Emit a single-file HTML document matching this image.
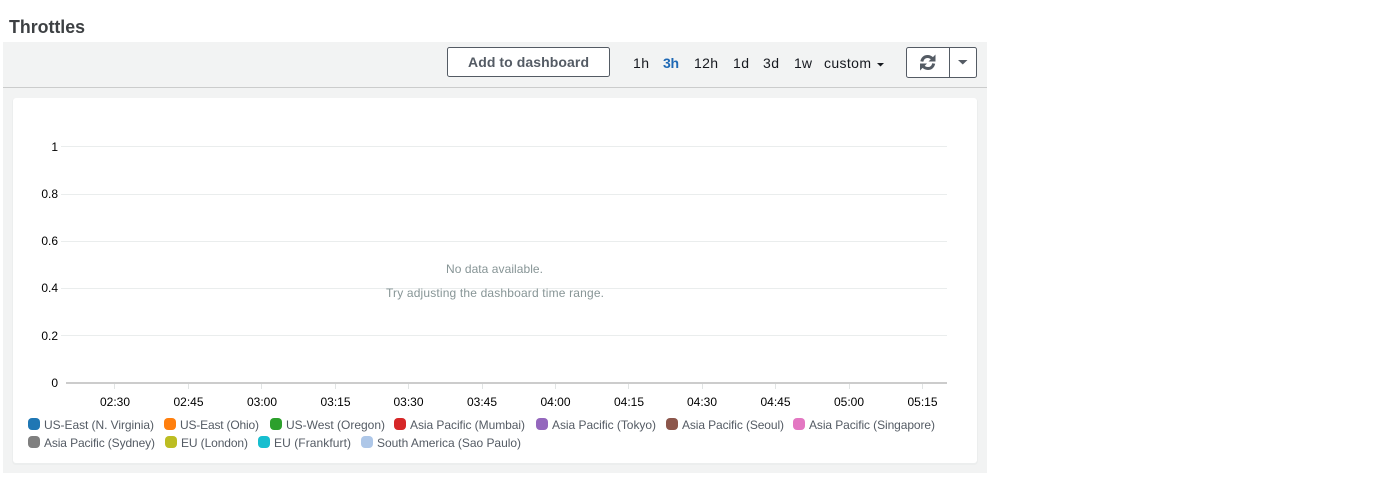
<!DOCTYPE html>
<html><head><meta charset="utf-8"><style>
html,body{margin:0;padding:0;background:#fff;width:1389px;height:481px;overflow:hidden}
svg{display:block}
text{font-family:"Liberation Sans",sans-serif}
.t{font-size:12px;fill:#000}
.l{font-size:12px;fill:#545b64}
.r{font-size:14px;fill:#16191f}
.g{stroke:#eaeded;stroke-width:1}
.k{stroke:#e1e4e4;stroke-width:1}
</style></head><body>
<svg width="1389" height="481" viewBox="0 0 1389 481" xmlns="http://www.w3.org/2000/svg">
<text x="9" y="33" font-size="18" font-weight="700" fill="#3d4043" textLength="76" lengthAdjust="spacingAndGlyphs">Throttles</text>
<rect x="3" y="42" width="984" height="431" fill="#f2f3f3"/>
<rect x="3" y="87" width="984" height="1" fill="#cbcccc"/>
<rect x="12" y="98" width="966" height="367" rx="4" fill="#eceeee"/>
<rect x="13" y="98" width="964" height="365" rx="3" fill="#fff"/>
<rect x="447.500" y="47.500" width="162" height="29" rx="2" fill="#fff" stroke="#545b64"/>
<text x="468" y="67" font-size="14" font-weight="700" fill="#545b64" textLength="121" lengthAdjust="spacing">Add to dashboard</text>
<text class="r" x="633" y="68" textLength="16">1h</text>
<text class="r" x="663" y="68" font-weight="700" style="fill:#1f69b5" textLength="16">3h</text>
<text class="r" x="694" y="68" textLength="24">12h</text>
<text class="r" x="733" y="68" textLength="16">1d</text>
<text class="r" x="763" y="68" textLength="16">3d</text>
<text class="r" x="794" y="68" textLength="18">1w</text>
<text class="r" x="824" y="68" textLength="47">custom</text>
<path d="M877 63h7l-3.500 3.500z" fill="#16191f"/>
<rect x="906.500" y="47.500" width="70" height="30" rx="2" fill="#fff" stroke="#545b64"/>
<path d="M949.500 48v29" stroke="#545b64"/>
<path d="M958 60h9.500l-4.750 4.500z" fill="#545b64"/>
<g fill="none" stroke="#545b64" stroke-width="3">
<path d="M921.800 61.500c.7-3.300 2.900-5 5.700-5 2.100 0 3.700.8 5 2.300"/>
<path d="M933.700 63.500c-.7 3.300-2.900 5-5.700 5-2.100 0-3.700-.8-5-2.300"/>
</g>
<path d="M935.500 54.500v7h-7zM920 70.500v-7h7z" fill="#545b64"/>
<path class="g" d="M61 146.500H947M61 194.500H947M61 241.500H947M61 288.500H947M61 335.500H947"/>
<rect x="66" y="382" width="881" height="2" fill="#cccccc"/>
<path class="k" d="M114.500 384v5M188.500 384v5M261.500 384v5M335.500 384v5M408.500 384v5M482.500 384v5M555.500 384v5M628.500 384v5M702.500 384v5M775.500 384v5M849.500 384v5M922.500 384v5"/>
<g text-anchor="end">
<text class="t" x="58" y="151">1</text>
<text class="t" x="58" y="198">0.8</text>
<text class="t" x="58" y="245">0.6</text>
<text class="t" x="58" y="292">0.4</text>
<text class="t" x="58" y="340">0.2</text>
<text class="t" x="58" y="387">0</text>
</g>
<g text-anchor="middle">
<text class="t" x="115" y="406">02:30</text>
<text class="t" x="188.500" y="406">02:45</text>
<text class="t" x="262" y="406">03:00</text>
<text class="t" x="335.500" y="406">03:15</text>
<text class="t" x="408.500" y="406">03:30</text>
<text class="t" x="482" y="406">03:45</text>
<text class="t" x="555.500" y="406">04:00</text>
<text class="t" x="629" y="406">04:15</text>
<text class="t" x="702" y="406">04:30</text>
<text class="t" x="775.500" y="406">04:45</text>
<text class="t" x="849" y="406">05:00</text>
<text class="t" x="922.500" y="406">05:15</text>
</g>
<text x="446" y="273" font-size="12" fill="#879596" textLength="97">No data available.</text>
<text x="386" y="297" font-size="12" fill="#879596" textLength="218">Try adjusting the dashboard time range.</text>
<rect x="28" y="418" width="12" height="12" rx="4" fill="#1f77b4"/><text class="l" x="44" y="429" textLength="110">US-East (N. Virginia)</text>
<rect x="164" y="418" width="12" height="12" rx="4" fill="#ff7f0e"/><text class="l" x="180" y="429" textLength="79">US-East (Ohio)</text>
<rect x="270" y="418" width="12" height="12" rx="4" fill="#2ca02c"/><text class="l" x="286" y="429" textLength="99">US-West (Oregon)</text>
<rect x="394" y="418" width="12" height="12" rx="4" fill="#d62728"/><text class="l" x="410" y="429" textLength="115">Asia Pacific (Mumbai)</text>
<rect x="536" y="418" width="12" height="12" rx="4" fill="#9467bd"/><text class="l" x="552" y="429" textLength="104">Asia Pacific (Tokyo)</text>
<rect x="666" y="418" width="12" height="12" rx="4" fill="#8c564b"/><text class="l" x="682" y="429" textLength="102">Asia Pacific (Seoul)</text>
<rect x="793" y="418" width="12" height="12" rx="4" fill="#e377c2"/><text class="l" x="809" y="429" textLength="126">Asia Pacific (Singapore)</text>
<rect x="28" y="436" width="12" height="12" rx="4" fill="#7f7f7f"/><text class="l" x="44" y="447" textLength="111">Asia Pacific (Sydney)</text>
<rect x="165" y="436" width="12" height="12" rx="4" fill="#bcbd22"/><text class="l" x="181" y="447" textLength="67">EU (London)</text>
<rect x="258" y="436" width="12" height="12" rx="4" fill="#17becf"/><text class="l" x="274" y="447" textLength="77">EU (Frankfurt)</text>
<rect x="361" y="436" width="12" height="12" rx="4" fill="#aec7e8"/><text class="l" x="377" y="447" textLength="144">South America (Sao Paulo)</text>
</svg>
</body></html>
